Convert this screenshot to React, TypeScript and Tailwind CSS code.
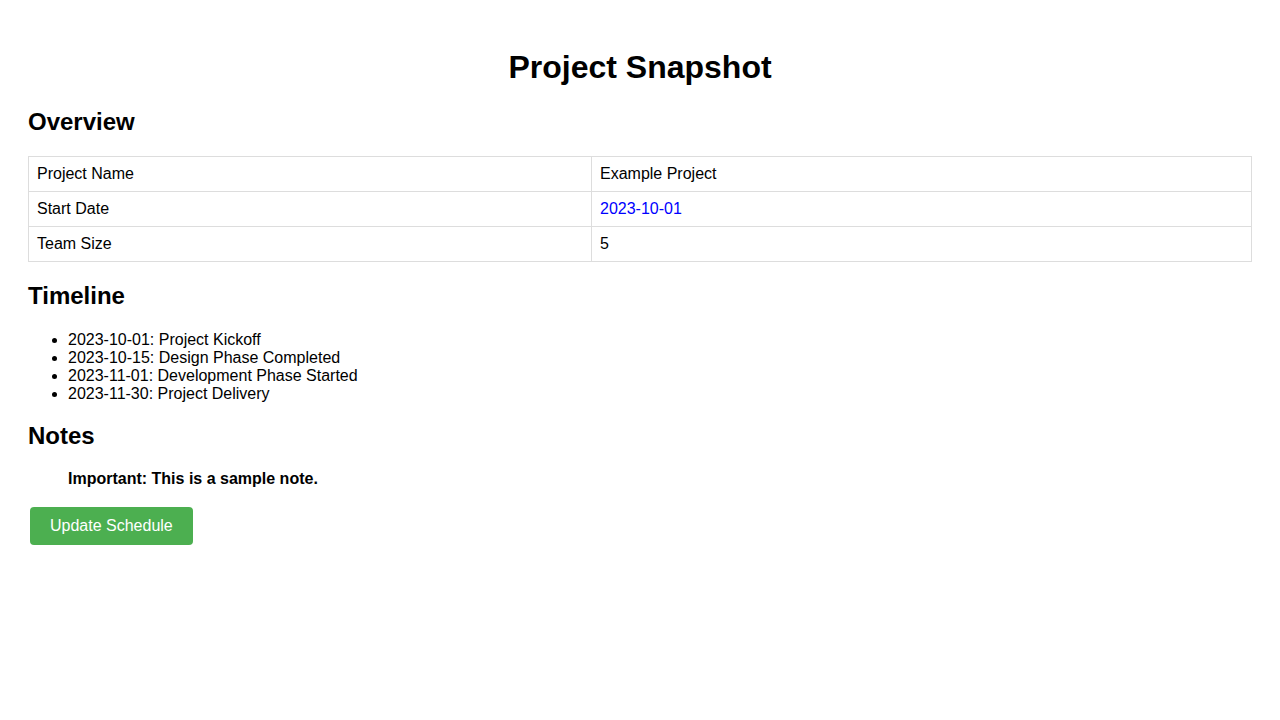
export default function App() {
    const rows = [
        { label: "Project Name", value: "Example Project", link: false },
        { label: "Start Date", value: "2023-10-01", link: true },
        { label: "Team Size", value: "5", link: false },
    ]
    const timeline = [
        "2023-10-01: Project Kickoff",
        "2023-10-15: Design Phase Completed",
        "2023-11-01: Development Phase Started",
        "2023-11-30: Project Delivery",
    ]

    return (
        <div className="min-h-screen bg-white px-[28px] pt-[28px] font-['Liberation_Sans',Arial,sans-serif] text-[16px] text-black">
            <h1 className="mt-[21px] mb-[22px] text-center text-[32px] font-bold leading-[37px]">Project Snapshot</h1>

            <h2 className="mt-[20px] mb-[20px] text-[24px] font-bold leading-[28px]">Overview</h2>
            <table className="w-full border-collapse">
                <tbody>
                    {rows.map((r) => (
                        <tr key={r.label}>
                            <td className="w-[563px] border border-[#dddddd] p-2 leading-[18px]">{r.label}</td>
                            <td className={`border border-[#dddddd] p-2 leading-[18px] ${r.link ? "text-[#0000ff]" : ""}`}>
                                {r.value}
                            </td>
                        </tr>
                    ))}
                </tbody>
            </table>

            <h2 className="mt-[20px] mb-[20px] text-[24px] font-bold leading-[28px]">Timeline</h2>
            <ul className="mt-[21px] mb-[19px] list-disc pl-10 leading-[18px]">
                {timeline.map((t) => (
                    <li key={t}>{t}</li>
                ))}
            </ul>

            <h2 className="mt-[19px] mb-[20px] text-[24px] font-bold leading-[28px]">Notes</h2>
            <p className="mb-[17px] ml-10 font-bold leading-[18px]">Important: This is a sample note.</p>
            <div>
                <button className="m-[2px] rounded-[4px] bg-[#4caf50] px-5 py-[10px] leading-[18px] text-white">
                    Update Schedule
                </button>
            </div>
        </div>
    )
}
